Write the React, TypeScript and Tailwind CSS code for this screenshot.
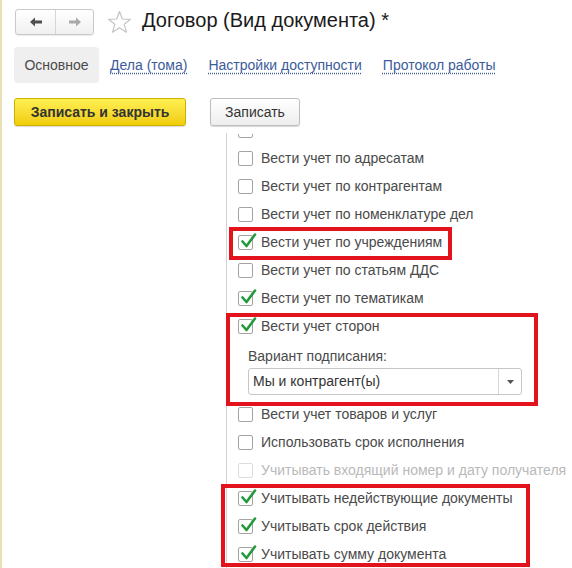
import React from "react";

type Row = {
  label: string;
  checked?: boolean;
  disabled?: boolean;
};

const rowsTop: Row[] = [
  { label: "Вести учет по адресатам" },
  { label: "Вести учет по контрагентам" },
  { label: "Вести учет по номенклатуре дел" },
  { label: "Вести учет по учреждениям", checked: true },
  { label: "Вести учет по статьям ДДС" },
  { label: "Вести учет по тематикам", checked: true },
  { label: "Вести учет сторон", checked: true },
];

const rowsBottom: Row[] = [
  { label: "Вести учет товаров и услуг" },
  { label: "Использовать срок исполнения" },
  { label: "Учитывать входящий номер и дату получателя", disabled: true },
  { label: "Учитывать недействующие документы", checked: true },
  { label: "Учитывать срок действия", checked: true },
  { label: "Учитывать сумму документа", checked: true },
];

function Checkbox({ checked, disabled }: { checked?: boolean; disabled?: boolean }) {
  return (
    <span
      className={
        "relative inline-block h-[15px] w-[15px] shrink-0 rounded-[2px] border bg-white " +
        (disabled ? "border-[#dcdcdc]" : "border-[#a3a3a3]")
      }
    >
      {checked && (
        <svg
          className="absolute left-[1px] top-[-4px]"
          width="17"
          height="17"
          viewBox="0 0 17 17"
        >
          <path
            d="M2.5 9.5 L6.5 14 L15 2.5"
            fill="none"
            stroke="#1f9a3a"
            strokeWidth="2.6"
            strokeLinecap="round"
            strokeLinejoin="round"
          />
        </svg>
      )}
    </span>
  );
}

function CheckRow({ row }: { row: Row }) {
  return (
    <div className="flex h-[28px] items-center pl-[11px]">
      <Checkbox checked={row.checked} disabled={row.disabled} />
      <span
        className={
          "ml-[8px] whitespace-nowrap text-[14px] " +
          (row.disabled ? "text-[#b9b9b9]" : "text-[#4a4a4a]")
        }
      >
        {row.label}
      </span>
    </div>
  );
}

function Arrow({ dir, color }: { dir: "left" | "right"; color: string }) {
  const d =
    dir === "left"
      ? "M1 6 L6 1.5 L6 4.5 L13 4.5 L13 7.5 L6 7.5 L6 10.5 Z"
      : "M13 6 L8 1.5 L8 4.5 L1 4.5 L1 7.5 L8 7.5 L8 10.5 Z";
  return (
    <svg width="14" height="12" viewBox="0 0 14 12">
      <path d={d} fill={color} />
    </svg>
  );
}

export default function App() {
  return (
    <div className="relative h-[568px] w-[572px] overflow-hidden border-l-2 border-[#e9e1b6] bg-white font-['Liberation_Sans',Arial,sans-serif]">
      {/* заголовок */}
      <div className="flex h-[35px] items-end pl-[13px]">
        <div className="flex h-[26px] w-[79px] items-stretch rounded-[3px] border border-[#c9c9c9] bg-gradient-to-b from-white to-[#f0f0f0] shadow-[0_1px_1px_rgba(0,0,0,0.08)]">
          <div className="flex w-[40px] items-center justify-center border-r border-[#d6d6d6]">
            <Arrow dir="left" color="#4f4f4f" />
          </div>
          <div className="flex flex-1 items-center justify-center">
            <Arrow dir="right" color="#a9a9a9" />
          </div>
        </div>
        <svg className="mb-[1px] ml-[13px]" width="25" height="24" viewBox="0 0 25 24">
          <path
            d="M12.5 1.5 L15.4 9 L23.5 9.3 L17.2 14.3 L19.4 22.2 L12.5 17.7 L5.6 22.2 L7.8 14.3 L1.5 9.3 L9.6 9 Z"
            fill="none"
            stroke="#c4c4c4"
            strokeWidth="1.2"
            strokeLinejoin="round"
          />
        </svg>
        <h1 className="mb-[2px] ml-[10px] whitespace-nowrap text-[20px] leading-[26px] text-[#1a1a1a]">
          Договор (Вид документа) *
        </h1>
      </div>

      {/* вкладки */}
      <div className="mt-[12px] flex h-[36px] items-center pl-[12px] text-[14px]">
        <div className="flex h-[36px] w-[85px] items-center justify-center rounded-[4px] bg-[#efefef] text-[#4a4a4a]">
          Основное
        </div>
        <a className="ml-[11px] text-[#3b5b9b] underline decoration-dotted underline-offset-[3px]">
          Дела (тома)
        </a>
        <a className="ml-[21px] text-[#3b5b9b] underline decoration-dotted underline-offset-[3px]">
          Настройки доступности
        </a>
        <a className="ml-[21px] text-[#3b5b9b] underline decoration-dotted underline-offset-[3px]">
          Протокол работы
        </a>
      </div>

      {/* кнопки */}
      <div className="mt-[15px] flex h-[28px] items-center gap-[24px] pl-[12px] text-[14px]">
        <button className="h-[28px] w-[172px] rounded-[3px] border border-[#cdb000] bg-gradient-to-b from-[#fff04f] to-[#f1cc00] font-bold text-[#333] shadow-[0_1px_1px_rgba(0,0,0,0.15)]">
          Записать и закрыть
        </button>
        <button className="h-[28px] w-[90px] rounded-[3px] border border-[#bdbdbd] bg-gradient-to-b from-white to-[#eeeeee] text-[#333] shadow-[0_1px_1px_rgba(0,0,0,0.15)]">
          Записать
        </button>
      </div>

      {/* реквизиты */}
      <div className="mt-[7px] ml-[224px] h-[435px] overflow-hidden border-l border-[#d2d2d2]">
        {/* строка, прокрученная за верхний край */}
        <div className="mt-[1px] h-[10px] overflow-hidden">
          <div className="-mt-[18px] flex h-[28px] items-center pl-[11px]">
            <Checkbox />
          </div>
        </div>
        {rowsTop.map((r) => (
          <CheckRow key={r.label} row={r} />
        ))}
        <div className="pl-[21px] pt-[7px] text-[14px] leading-[18px] text-[#4a4a4a]">
          Вариант подписания:
        </div>
        <div className="ml-[21px] mt-[3px] flex h-[27px] w-[274px] items-stretch rounded-[3px] border border-[#c6c6c6] bg-white text-[14px]">
          <div className="flex flex-1 items-center pl-[4px] text-[#333]">Мы и контрагент(ы)</div>
          <div className="flex w-[23px] items-center justify-center border-l border-[#d6d6d6]">
            <svg width="7" height="4" viewBox="0 0 7 4">
              <path d="M0 0 L7 0 L3.5 4 Z" fill="#555" />
            </svg>
          </div>
        </div>
        <div className="h-[5px]" />
        {rowsBottom.map((r) => (
          <CheckRow key={r.label} row={r} />
        ))}
      </div>

      {/* красные рамки-пометки */}
      <div className="pointer-events-none absolute left-[227px] top-[227px] h-[33px] w-[223px] border-[4px] border-[#e3131d]" />
      <div className="pointer-events-none absolute left-[224px] top-[313px] h-[93px] w-[312px] border-[4px] border-[#e3131d]" />
      <div className="pointer-events-none absolute left-[219px] top-[484px] h-[83px] w-[309px] border-[4px] border-[#e3131d]" />
    </div>
  );
}
